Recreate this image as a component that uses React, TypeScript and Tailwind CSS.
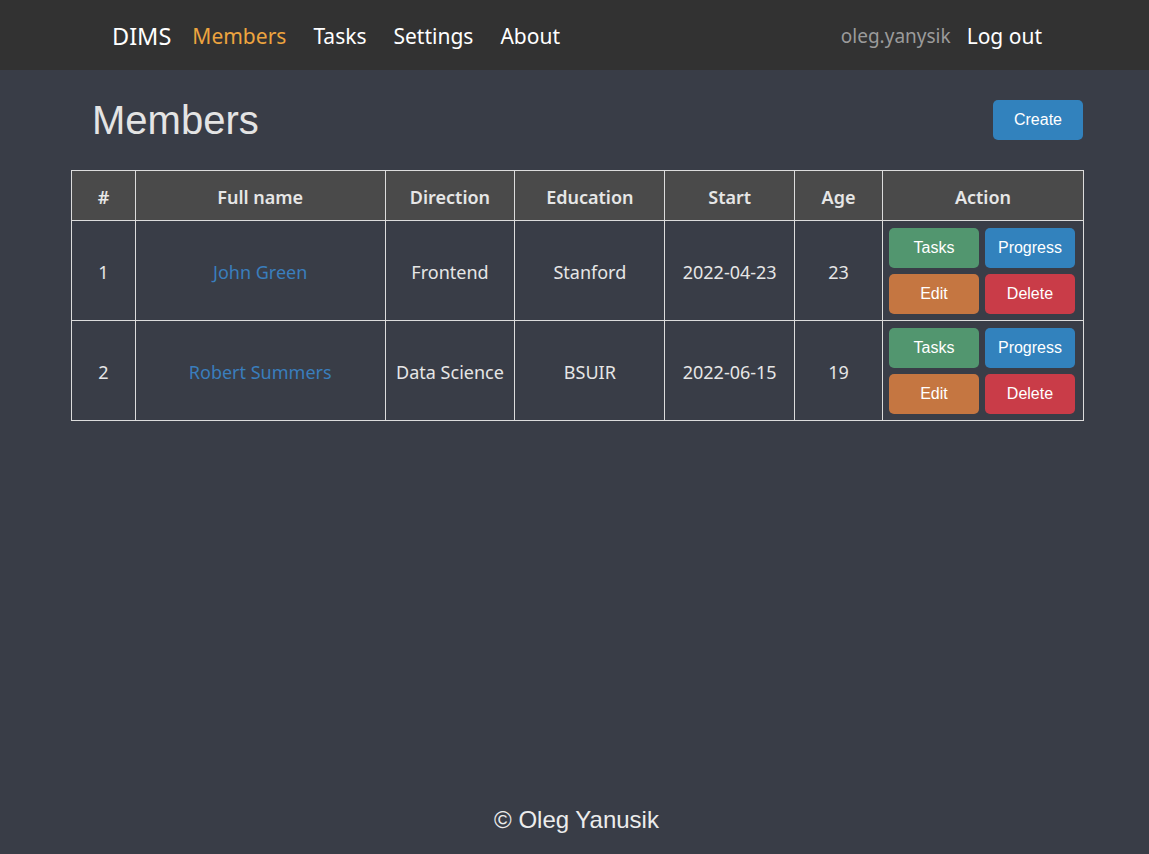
import React from "react";

const seg = { fontFamily: '"Noto Sans", "Open Sans", sans-serif' };
const arial = { fontFamily: '"Liberation Sans", Arial, sans-serif' };

const members = [
  { id: 1, name: "John Green", direction: "Frontend", education: "Stanford", start: "2022-04-23", age: 23 },
  { id: 2, name: "Robert Summers", direction: "Data Science", education: "BSUIR", start: "2022-06-15", age: 19 },
];

function Btn({ label, color }: { label: string; color: string }) {
  return (
    <button
      className={`h-[40px] w-[90px] rounded-[5px] text-[16px] text-white ${color}`}
      style={arial}
    >
      {label}
    </button>
  );
}

export default function App() {
  return (
    <div className="min-h-screen h-[854px] flex flex-col bg-[#393d47]">
      <nav className="h-[70px] bg-[#323232] flex items-center pt-[3px] pl-[112px] pr-[107px] text-[21px]" style={seg}>
        <span className="text-white text-[23.5px] mr-[21px]">DIMS</span>
        <span className="text-[#eda43f] mr-[27px]">Members</span>
        <span className="text-white mr-[27px]">Tasks</span>
        <span className="text-white mr-[27px]">Settings</span>
        <span className="text-white">About</span>
        <span className="ml-auto text-[#9b9b9b] text-[19px] mr-[16px]">oleg.yanysik</span>
        <span className="text-white">Log out</span>
      </nav>
      <main className="pl-[71px] pr-[65px]">
        <div className="flex items-center justify-between pl-[21px] h-[100px]">
          <h1 className="text-[40px] text-[#e4e4e4] leading-none" style={arial}>Members</h1>
          <button className="h-[40px] w-[90px] rounded-[5px] bg-[#3282bd] text-white text-[16px] mr-[1px]" style={arial}>
            Create
          </button>
        </div>
        <table className="border-collapse w-[1013px] text-[18px] text-[#e6e6e6]" style={seg}>
          <colgroup>
            <col className="w-[64px]" />
            <col className="w-[250px]" />
            <col className="w-[130px]" />
            <col className="w-[150px]" />
            <col className="w-[130px]" />
            <col className="w-[88px]" />
            <col className="w-[201px]" />
          </colgroup>
          <thead>
            <tr className="h-[50px] bg-[#4a4a4a]">
              {["#", "Full name", "Direction", "Education", "Start", "Age", "Action"].map((h) => (
                <th key={h} className="border border-[#dcdcdc] font-semibold text-center pt-[3px]">{h}</th>
              ))}
            </tr>
          </thead>
          <tbody>
            {members.map((m) => (
              <tr key={m.id} className="h-[100px]">
                <td className="border border-[#dcdcdc] text-center pt-[3px]">{m.id}</td>
                <td className="border border-[#dcdcdc] text-center pt-[3px] text-[#3a7ebd]">{m.name}</td>
                <td className="border border-[#dcdcdc] text-center pt-[3px]">{m.direction}</td>
                <td className="border border-[#dcdcdc] text-center pt-[3px]">{m.education}</td>
                <td className="border border-[#dcdcdc] text-center pt-[3px]">{m.start}</td>
                <td className="border border-[#dcdcdc] text-center pt-[3px]">{m.age}</td>
                <td className="border border-[#dcdcdc]">
                  <div className="grid grid-cols-[90px_90px] gap-[6px] pl-[6px]">
                    <Btn label="Tasks" color="bg-[#52966f]" />
                    <Btn label="Progress" color="bg-[#3282bd]" />
                    <Btn label="Edit" color="bg-[#c57641]" />
                    <Btn label="Delete" color="bg-[#c93c48]" />
                  </div>
                </td>
              </tr>
            ))}
          </tbody>
        </table>
      </main>
      <footer className="mt-auto h-[68px] flex items-center justify-center pl-[4px] text-[24px] text-[#ececec]" style={arial}>
        © Oleg Yanusik
      </footer>
    </div>
  );
}
